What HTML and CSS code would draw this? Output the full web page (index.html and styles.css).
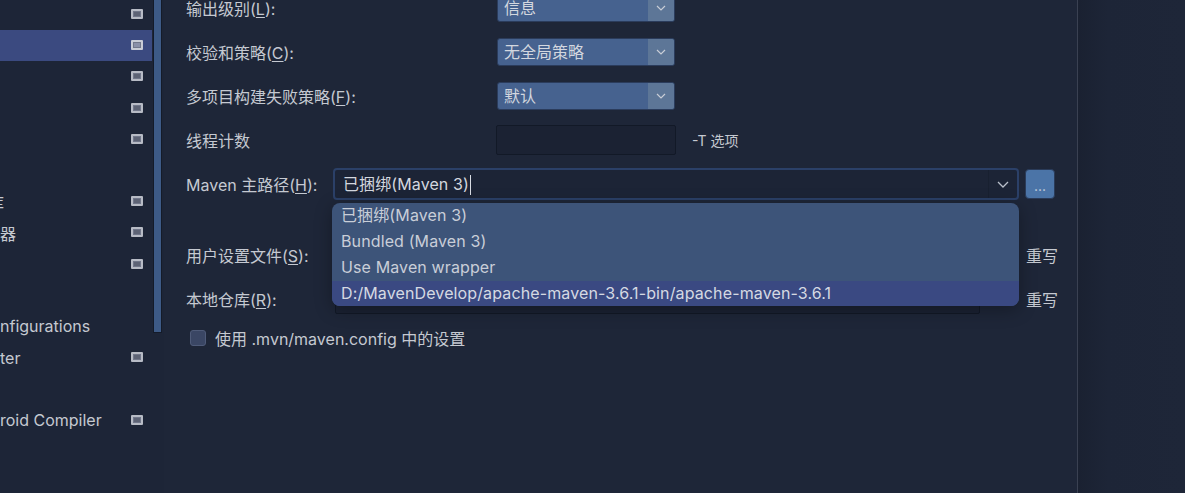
FILE: index.html
```html
<!DOCTYPE html>
<html lang="zh-CN">
<head>
    <meta charset="UTF-8">
    <title>Maven 设置</title>
    <link rel="stylesheet" href="styles.css">
</head>
<body>
    <div class="sidebar">
        <div class="tree-row"><span class="tree-text"></span><span class="tree-icon"></span></div>
        <div class="tree-row selected"><span class="tree-text"></span><span class="tree-icon"></span></div>
        <div class="tree-row"><span class="tree-text"></span><span class="tree-icon"></span></div>
        <div class="tree-row"><span class="tree-text"></span><span class="tree-icon"></span></div>
        <div class="tree-row"><span class="tree-text"></span><span class="tree-icon"></span></div>
        <div class="tree-row"></div>
        <div class="tree-row"><span class="tree-text cut">库</span><span class="tree-icon"></span></div>
        <div class="tree-row"><span class="tree-text">器</span><span class="tree-icon"></span></div>
        <div class="tree-row"><span class="tree-text"></span><span class="tree-icon"></span></div>
        <div class="tree-row"></div>
        <div class="tree-row"><span class="tree-text">nfigurations</span></div>
        <div class="tree-row"><span class="tree-text">ter</span><span class="tree-icon"></span></div>
        <div class="tree-row"></div>
        <div class="tree-row"><span class="tree-text">roid Compiler</span><span class="tree-icon"></span></div>
    </div>

    <div class="scroll-track">
        <div class="scroll-thumb"></div>
    </div>

    <div class="content">
        <div class="form-row first">
            <label class="label wide">输出级别(<u>L</u>):</label>
            <div class="combo"><span class="combo-text">信息</span><span class="combo-arrow"><svg width="10" height="6" viewBox="0 0 10 6"><path d="M1 1l4 4 4-4" fill="none" stroke="#c8cdd6" stroke-width="1.2"/></svg></span></div>
        </div>
        <div class="form-row">
            <label class="label wide">校验和策略(<u>C</u>):</label>
            <div class="combo"><span class="combo-text">无全局策略</span><span class="combo-arrow"><svg width="10" height="6" viewBox="0 0 10 6"><path d="M1 1l4 4 4-4" fill="none" stroke="#c8cdd6" stroke-width="1.2"/></svg></span></div>
        </div>
        <div class="form-row">
            <label class="label wide">多项目构建失败策略(<u>F</u>):</label>
            <div class="combo"><span class="combo-text">默认</span><span class="combo-arrow"><svg width="10" height="6" viewBox="0 0 10 6"><path d="M1 1l4 4 4-4" fill="none" stroke="#c8cdd6" stroke-width="1.2"/></svg></span></div>
        </div>
        <div class="form-row">
            <label class="label wide">线程计数</label>
            <div class="text-field threads"></div>
            <span class="hint">-T 选项</span>
        </div>
        <div class="form-row">
            <label class="label narrow">Maven 主路径(<u>H</u>):</label>
            <div class="editor">
                <span class="editor-text">已捆绑(Maven 3)<span class="caret"></span></span>
                <span class="editor-arrow"><svg width="12" height="7" viewBox="0 0 12 7"><path d="M1 1l5 5 5-5" fill="none" stroke="#b9bfca" stroke-width="1.3"/></svg></span>
            </div>
            <button class="browse">...</button>
        </div>
        <div class="version-row"></div>
        <div class="form-row">
            <label class="label path">用户设置文件(<u>S</u>):</label>
            <div class="text-field path-field"></div>
            <span class="override">重写</span>
        </div>
        <div class="form-row">
            <label class="label path">本地仓库(<u>R</u>):</label>
            <div class="text-field path-field"></div>
            <span class="override">重写</span>
        </div>
        <div class="check-row">
            <span class="checkbox"></span>
            <span>使用 .mvn/maven.config 中的设置</span>
        </div>

        <!-- 下拉列表 -->
        <ul class="popup">
            <li>已捆绑(Maven 3)</li>
            <li>Bundled (Maven 3)</li>
            <li>Use Maven wrapper</li>
            <li class="active">D:/MavenDevelop/apache-maven-3.6.1-bin/apache-maven-3.6.1</li>
        </ul>
    </div>

    <div class="right-pane"></div>
</body>
</html>
```

FILE: styles.css
```css
body {
    margin: 0;
    width: 1185px;
    height: 493px;
    overflow: hidden;
    display: flex;
    background-color: #1e2638;
    color: #c5c9d1;
    font-family: "Inter", "Noto Sans CJK SC", sans-serif;
    font-size: 16px;
}
u {
    text-decoration-thickness: 1px;
    text-underline-offset: 2px;
}

/* 左侧树 */
.sidebar {
    width: 152px;
    flex-shrink: 0;
    margin-top: -1px;
    background-color: #1d2537;
}
.tree-row {
    height: 31.2px;
    display: flex;
    align-items: center;
    justify-content: space-between;
    padding-right: 9px;
}
.tree-row.selected {
    background-color: #3b4a80;
}
.tree-text {
    white-space: nowrap;
}
.tree-text.cut {
    margin-left: -12px;
}
.tree-icon {
    width: 8px;
    height: 6px;
    margin-top: -1px;
    border: 2px solid #b7bbc5;
    border-radius: 1px;
    background-color: #5d6375;
    box-shadow: inset 0 0 0 1px #71778a;
}
.tree-row.selected .tree-icon {
    border-color: #c9ccd6;
    background-color: #8a90a8;
}

.scroll-track {
    width: 12px;
    flex-shrink: 0;
    background-color: #1d2537;
}
.scroll-thumb {
    width: 9px;
    height: 333px;
    margin-left: 1px;
    background-color: #3d5a86;
    border: 1px solid #141b29;
    border-top: none;
    box-sizing: border-box;
}

/* 表单 */
.content {
    position: relative;
    width: 914px;
    flex-shrink: 0;
    padding-left: 22px;
    box-sizing: border-box;
    border-right: 1px solid #3a4152;
}
.form-row {
    height: 44px;
    display: flex;
    align-items: center;
}
.form-row.first {
    margin-top: -14px;
}
.label {
    flex-shrink: 0;
    white-space: nowrap;
}
.label.wide {
    width: 311px;
}
.label.narrow {
    width: 147px;
}
.label.path {
    width: 149px;
}
.combo {
    width: 178px;
    height: 28px;
    display: flex;
    background-color: #46628f;
    border: 1px solid #2b3c5c;
    border-radius: 3px;
    box-sizing: border-box;
    overflow: hidden;
    color: #d3d7df;
}
.combo-text {
    flex: 1;
    padding-left: 6px;
    line-height: 26px;
}
.combo-arrow {
    width: 26px;
    background-color: #5d7697;
    display: flex;
    align-items: center;
    justify-content: center;
}
.text-field {
    height: 30px;
    background-color: #1b2233;
    border: 1px solid #121927;
    border-radius: 2px;
    box-sizing: border-box;
}
.text-field.threads {
    width: 180px;
    margin-left: -1px;
}
.hint {
    margin-left: 16px;
    font-size: 14px;
}
.editor {
    width: 686px;
    height: 32px;
    display: flex;
    background-color: #1c2436;
    border: 2px solid #2b4068;
    border-radius: 4px;
    box-sizing: border-box;
}
.editor-text {
    flex: 1;
    padding-left: 8px;
    line-height: 28px;
    letter-spacing: 0.1px;
    color: #d3d7df;
}
.caret {
    display: inline-block;
    width: 1px;
    height: 20px;
    margin-left: 1px;
    vertical-align: -5px;
    background-color: #d8dce4;
}
.editor-arrow {
    width: 28px;
    border-left: 1px solid #182030;
    display: flex;
    align-items: center;
    justify-content: center;
}
.browse {
    width: 30px;
    height: 30px;
    margin-left: 6px;
    padding: 4px 0 0;
    background-color: #4b74a7;
    border: 1px solid #2a3b59;
    border-radius: 4px;
    color: #c6d0de;
    font-family: inherit;
    font-size: 14px;
    line-height: 20px;
}
.version-row {
    height: 27px;
}
.text-field.path-field {
    width: 645px;
    flex-shrink: 0;
}
.override {
    margin-left: 46px;
    white-space: nowrap;
}
.check-row {
    height: 34px;
    display: flex;
    align-items: center;
    padding-left: 4px;
}
.checkbox {
    width: 16px;
    height: 16px;
    margin-right: 9px;
    background-color: #3a4664;
    border: 1px solid #4f5b79;
    border-radius: 3px;
    box-sizing: border-box;
}

/* 下拉弹出层 */
.popup {
    position: absolute;
    left: 168px;
    top: 203px;
    width: 687px;
    margin: 0;
    padding: 0;
    list-style: none;
    background-color: #3d5479;
    border-radius: 8px;
    overflow: hidden;
    box-shadow: 0 4px 18px rgba(0, 0, 0, 0.3);
    color: #c9ced8;
    letter-spacing: 0.12px;
}
.popup li {
    height: 26px;
    line-height: 25px;
    padding-left: 9px;
    white-space: nowrap;
}
.popup li.active {
    height: 25px;
    background-color: #3a4982;
    color: #d5d9e2;
}

.right-pane {
    flex: 1;
    background: linear-gradient(to right, #1a2131, #1d2537 30px, #1e2638);
}
```
